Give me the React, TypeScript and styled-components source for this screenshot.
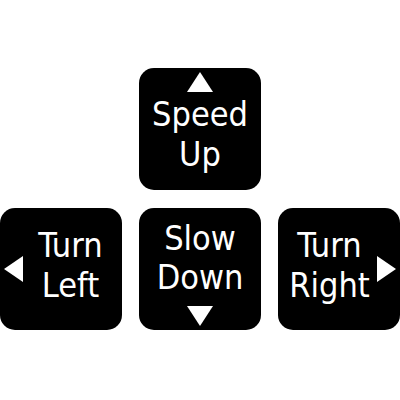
import styled, { createGlobalStyle } from "styled-components";

const Global = createGlobalStyle`
  html, body {
    margin: 0;
    padding: 0;
    background: #fff;
  }
`;

type Dir = "up" | "down" | "left" | "right";

const KEYS: { label: [string, string]; dir: Dir; col: number; row: number }[] = [
  { label: ["Speed", "Up"], dir: "up", col: 2, row: 1 },
  { label: ["Turn", "Left"], dir: "left", col: 1, row: 2 },
  { label: ["Slow", "Down"], dir: "down", col: 2, row: 2 },
  { label: ["Turn", "Right"], dir: "right", col: 3, row: 2 },
];

const POINTS: Record<Dir, string> = {
  up: "13,0 26,20 0,20",
  down: "0,0 26,0 13,20",
  left: "0,13 19,0 19,26",
  right: "0,0 19,13 0,26",
};

function Arrow({ dir }: { dir: Dir }) {
  const flat = dir === "up" || dir === "down";
  const w = flat ? 26 : 19;
  const h = flat ? 20 : 26;
  return (
    <ArrowSvg width={w} height={h} viewBox={`0 0 ${w} ${h}`}>
      <polygon points={POINTS[dir]} fill="#fff" />
    </ArrowSvg>
  );
}

export default function App() {
  return (
    <>
      <Global />
      <Pad>
        {KEYS.map((k) => (
          <Key key={k.dir} $dir={k.dir} $col={k.col} $row={k.row}>
            <Arrow dir={k.dir} />
            <Label $dir={k.dir}>
              {k.label[0]}
              <br />
              {k.label[1]}
            </Label>
          </Key>
        ))}
      </Pad>
    </>
  );
}

const Pad = styled.div`
  width: 400px;
  height: 400px;
  box-sizing: border-box;
  padding-top: 68px;
  display: grid;
  grid-template-columns: repeat(3, 122px);
  grid-template-rows: repeat(2, 122px);
  column-gap: 17px;
  row-gap: 18px;
  justify-content: center;
  align-content: start;
`;

const FLOW: Record<Dir, string> = {
  up: "column",
  down: "column-reverse",
  left: "row",
  right: "row-reverse",
};

const Key = styled.div<{ $dir: Dir; $col: number; $row: number }>`
  grid-column: ${(p) => p.$col};
  grid-row: ${(p) => p.$row};
  background: #000;
  border-radius: 15px;
  display: flex;
  flex-direction: ${(p) => FLOW[p.$dir]};
  align-items: center;
  padding: 4px;
  box-sizing: border-box;
`;

const ArrowSvg = styled.svg`
  display: block;
  flex: none;
`;

const Label = styled.div<{ $dir: Dir }>`
  color: #fff;
  font-family: "DejaVu Sans Condensed", "DejaVu Sans", sans-serif;
  font-stretch: condensed;
  font-size: 34px;
  line-height: 1.164;
  text-align: center;
  white-space: nowrap;
  ${(p) =>
    p.$dir === "up"
      ? "margin-top: 3px;"
      : p.$dir === "down"
      ? "margin-bottom: 8px;"
      : "flex: 1; padding-bottom: 6px;"}
`;
